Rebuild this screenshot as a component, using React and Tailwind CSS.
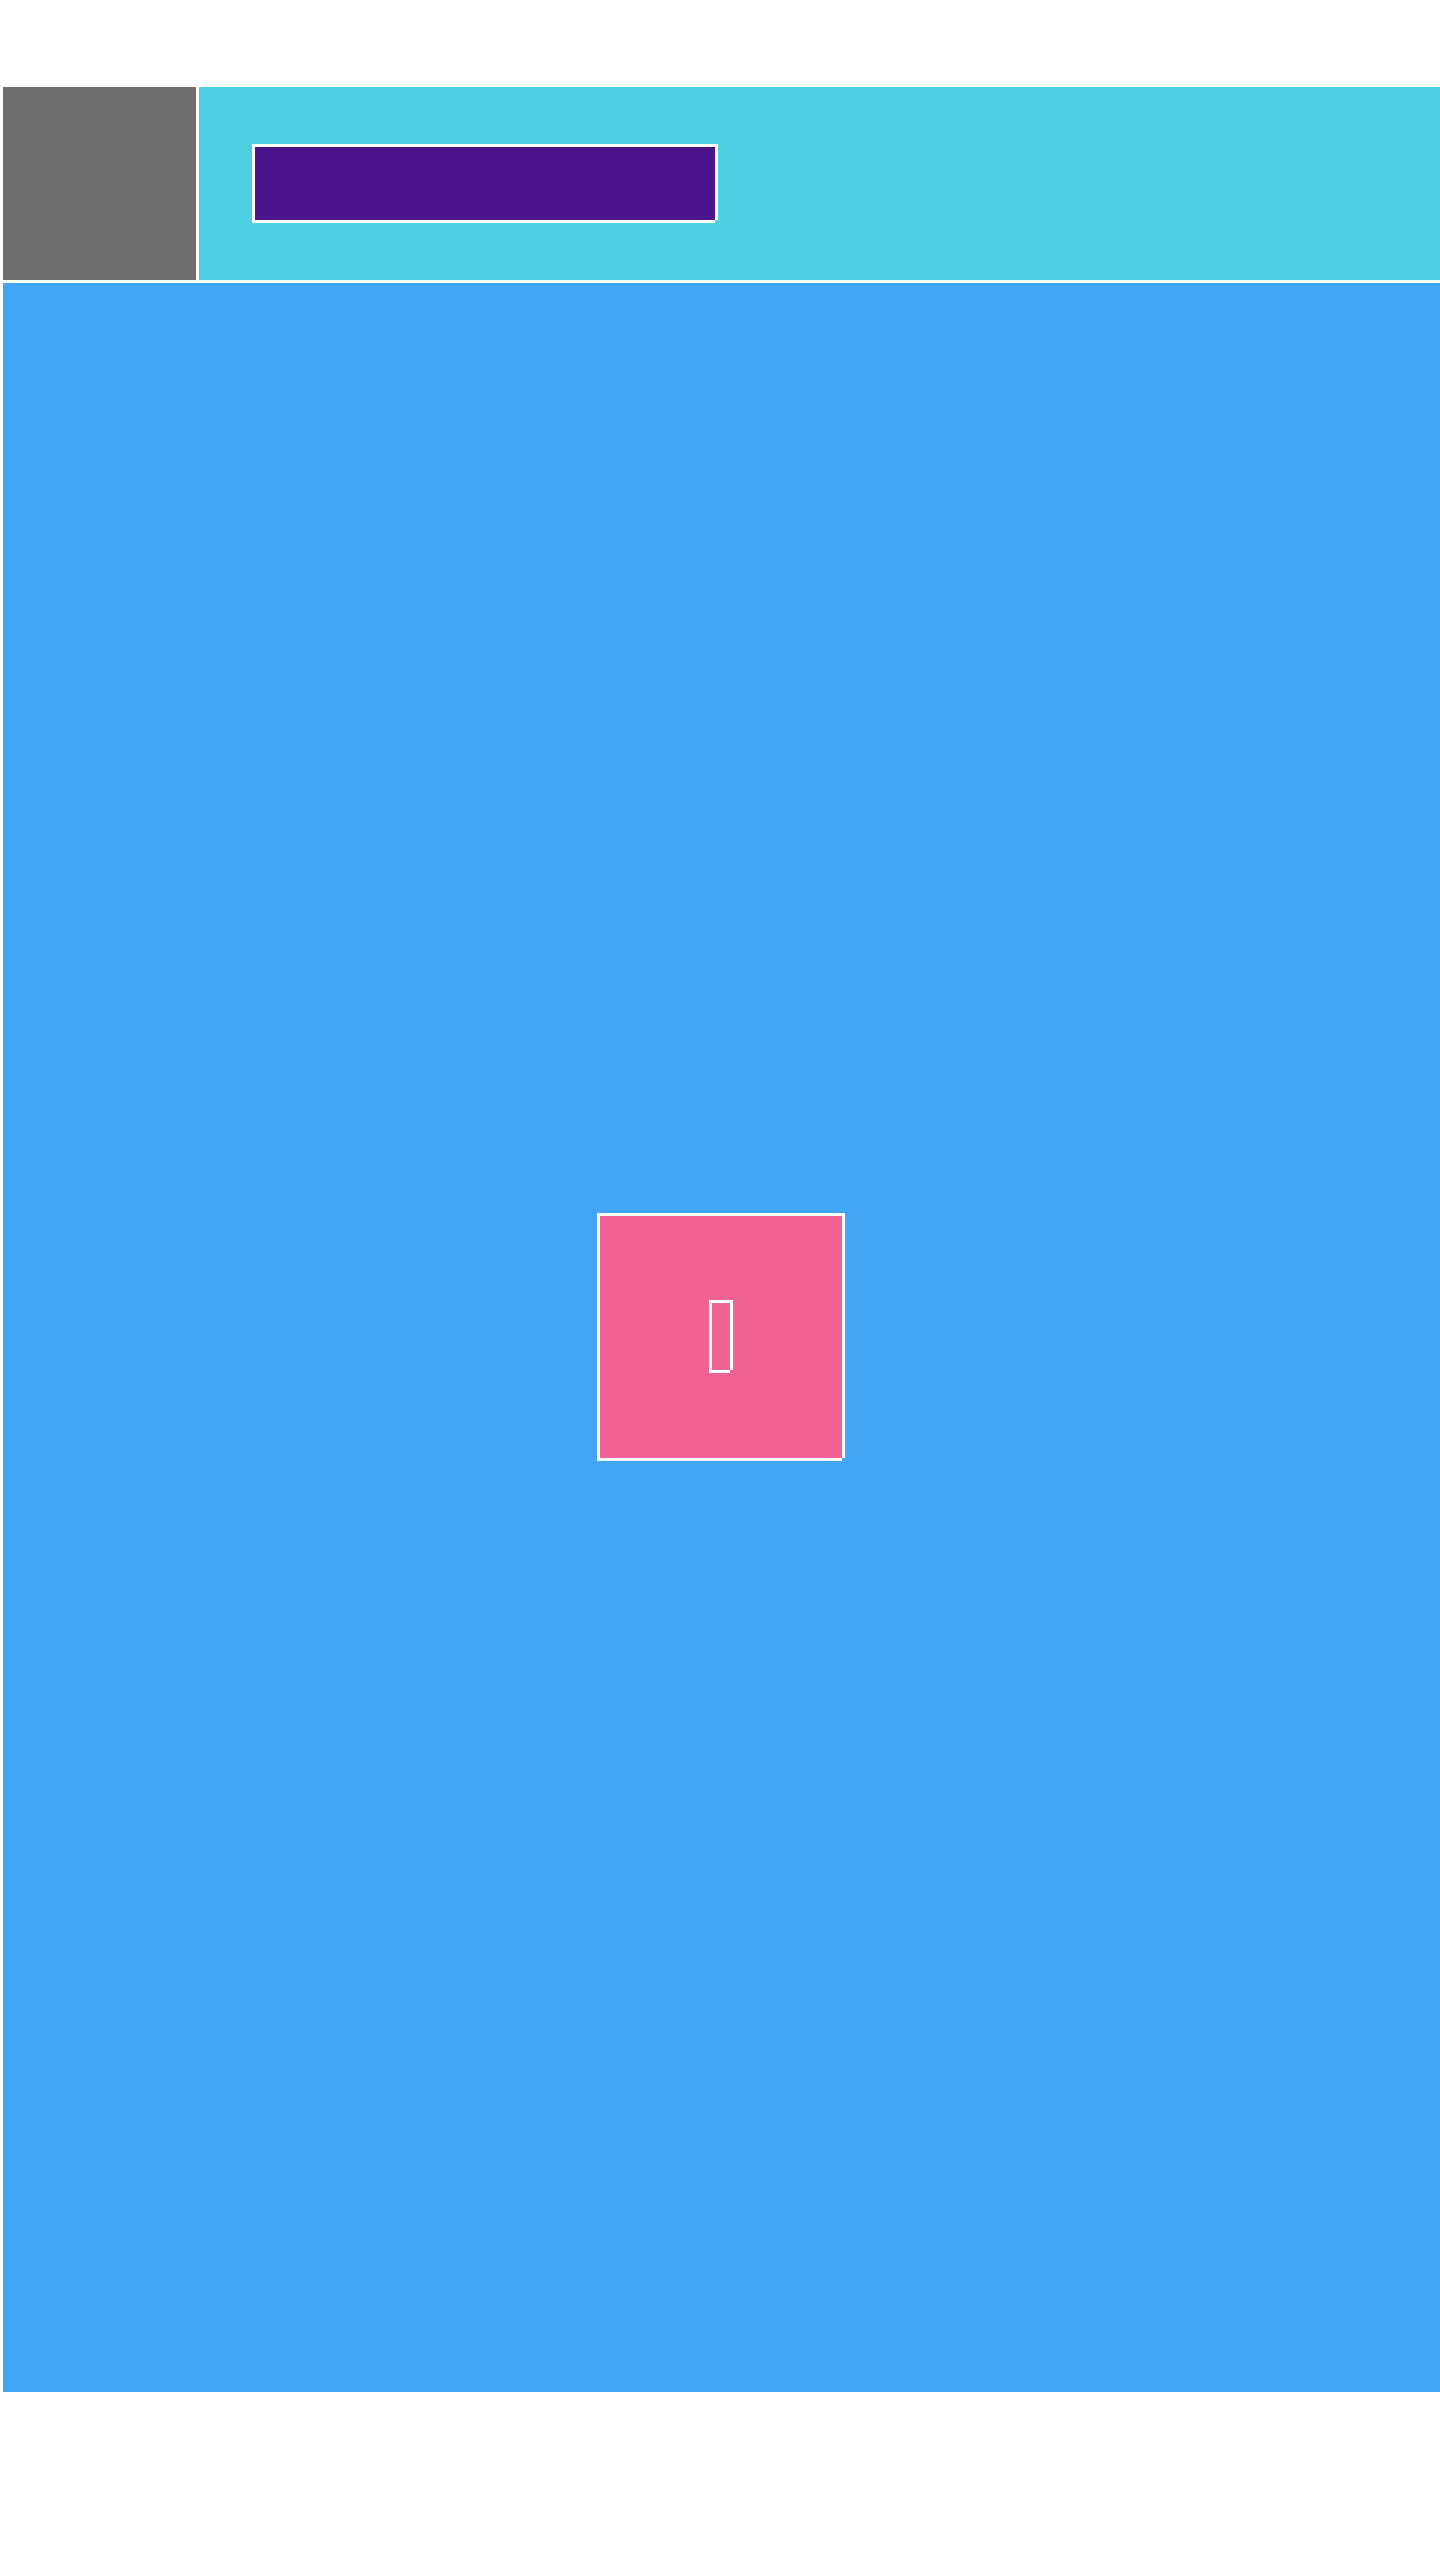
export default function App() {
  return (
    <div className="min-h-[2560px] bg-white pt-[87px] pl-[3px]">
      <div className="grid grid-cols-[193px_1fr] grid-rows-[193px_2109px] gap-[3px]">
        <div className="bg-[#6f6f6f]" />
        <div className="flex items-start bg-[#4dd0e1] pl-[53px] pt-[57px]">
          <div className="h-[76px] w-[463px] border-l-[3px] border-t-[3px] border-white bg-[#4a148c] shadow-[3px_0_0_#fff,0_3px_0_#fff]" />
        </div>
        <div className="col-span-2 flex items-center justify-center bg-[#42a5f5]">
          <div className="mr-[4px] mb-[4px] flex h-[245px] w-[245px] items-center justify-center border-l-[3px] border-t-[3px] border-white bg-[#f06292] shadow-[3px_0_0_#fff,0_3px_0_#fff]">
            <span className="mr-[3px] mb-[4px] block h-[70px] w-[21px] border-l-[3px] border-t-[3px] border-white shadow-[3px_0_0_#fff,0_3px_0_#fff]" />
          </div>
        </div>
      </div>
    </div>
  );
}
